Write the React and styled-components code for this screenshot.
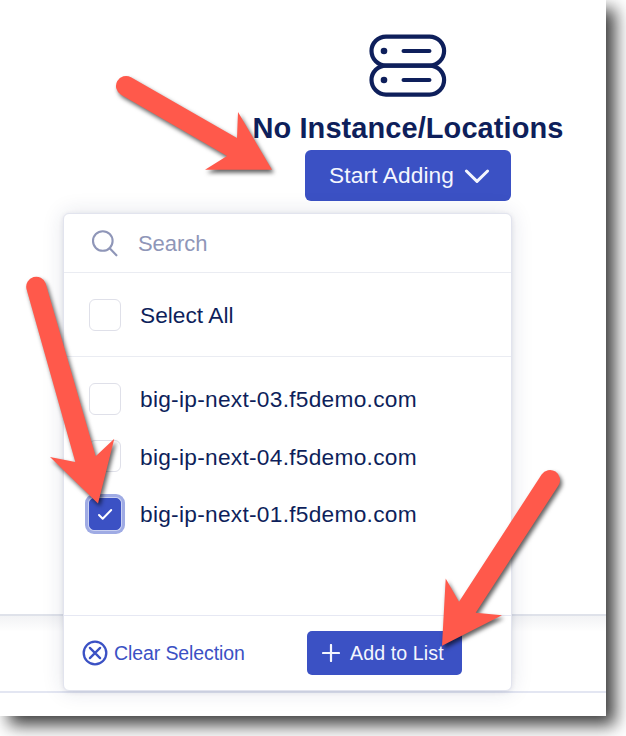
import React from "react";
import styled, { createGlobalStyle, css } from "styled-components";

const NAVY = "#0e1f5b";
const BLUE = "#3b51c4";
const FONT = '"Liberation Sans", Arial, sans-serif';

const Global = createGlobalStyle`
  *, *::before, *::after { box-sizing: border-box; }
  body { margin: 0; background: #fff; overflow: hidden; font-family: ${FONT}; }
`;

const Frame = styled.div`
  width: 626px;
  height: 736px;
  overflow: hidden;
`;

const Sheet = styled.main`
  position: relative;
  display: flex;
  flex-direction: column;
  width: 606px;
  height: 716px;
  background: #fff;
  box-shadow: 9px 9px 16px rgba(0, 0, 0, 0.76);
`;

const EmptyState = styled.section`
  display: flex;
  flex-direction: column;
  align-items: center;
  height: 614px;
  padding: 34px 0 0 210px;
`;

const Title = styled.h1`
  margin: 14px 0 5px;
  font-size: 29px;
  line-height: 34px;
  font-weight: 700;
  letter-spacing: 0.07px;
  white-space: nowrap;
  color: ${NAVY};
`;

const Button = styled.button`
  display: flex;
  align-items: center;
  flex-shrink: 0;
  border: 0;
  background: ${BLUE};
  color: #f4f6fe;
  font-family: ${FONT};
  white-space: nowrap;
  ${(p) =>
    p.$large
      ? css`
          width: 206px;
          height: 51px;
          padding: 0 0 0 24px;
          gap: 10px;
          border-radius: 6px;
          font-size: 22.7px;
          letter-spacing: 0.12px;
        `
      : css`
          width: 155px;
          height: 44px;
          padding: 0 0 0 15px;
          gap: 10px;
          border-radius: 5px;
          font-size: 19.6px;
          letter-spacing: 0.1px;
        `}
`;

const FooterBand = styled.div`
  height: 79px;
  border-top: 2px solid #dfe2ea;
  border-bottom: 2px solid #e3e6f2;
  background: linear-gradient(rgba(40, 50, 80, 0.06), rgba(40, 50, 80, 0) 16px);
`;

const Menu = styled.div`
  position: absolute;
  left: 63px;
  top: 213px;
  display: flex;
  flex-direction: column;
  width: 449px;
  height: 478px;
  border: 1px solid #e2e4ee;
  border-radius: 6px;
  background: #fff;
  box-shadow: 0 0 22px rgba(30, 40, 90, 0.12), 0 1px 5px rgba(30, 40, 90, 0.1);
`;

const SearchBar = styled.div`
  display: flex;
  align-items: center;
  gap: 20px;
  height: 59px;
  padding-left: 27px;
  border-bottom: 1px solid #eaecf2;
  color: #8f96b8;
  font-size: 22px;
  letter-spacing: -0.05px;
`;

const SelectAll = styled.div`
  display: flex;
  align-items: center;
  height: 84px;
  padding-left: 25px;
  border-bottom: 1px solid #eaecf2;
`;

const Options = styled.div`
  display: flex;
  flex-direction: column;
  flex: 1;
  padding: 13px 0 0 25px;
`;

const Option = styled.label`
  display: flex;
  align-items: center;
  gap: 19px;
  height: 57.5px;
  color: ${NAVY};
  font-size: 22.7px;
  letter-spacing: ${(p) => p.$tracking || "0.28px"};
  white-space: nowrap;
`;

const Label = styled.span`
  padding-top: 2px;
`;

const Box = styled.span`
  display: flex;
  align-items: center;
  justify-content: center;
  width: 32px;
  height: 32px;
  border: 1px solid #dfe0e9;
  border-radius: 6px;
  background: #fff;
  ${(p) =>
    p.$checked &&
    css`
      border-color: ${BLUE};
      border-radius: 5px;
      background: ${BLUE};
      box-shadow: 0 0 0 1px #c9d0f1, 0 0 0 4px #9fabe4;
    `}
`;

const MenuFooter = styled.footer`
  display: flex;
  align-items: center;
  justify-content: space-between;
  height: 75px;
  padding: 0 49px 0 18px;
  border-top: 1px solid #e6e8f3;
`;

const ClearLink = styled.a`
  display: flex;
  align-items: center;
  gap: 6px;
  color: ${BLUE};
  font-size: 19.5px;
  letter-spacing: -0.1px;
`;

const Icon = styled.svg`
  display: block;
  flex-shrink: 0;
  fill: none;
  stroke: currentColor;
  stroke-linecap: round;
  stroke-linejoin: round;
`;

const ServerIcon = styled(Icon)`
  color: ${NAVY};
`;

const Annotations = styled.svg`
  position: absolute;
  left: 0;
  top: 0;
  fill: #ff594b;
  pointer-events: none;
`;

const Arrow = styled.path`
  filter: drop-shadow(2.5px 3px 2px rgba(0, 0, 0, 0.62));
`;

const hosts = [
  { name: "big-ip-next-03.f5demo.com" },
  { name: "big-ip-next-04.f5demo.com" },
  { name: "big-ip-next-01.f5demo.com", checked: true },
];

const arrows = [
  "M131 77.3 L237 138 L238 112 L272 169.7 L205 169.7 L227 156 L121 94.7 A10 10 0 0 1 131 77.3 Z",
  "M45.6 283.3 L95.7 456.3 L114.3 438.7 L98 503.5 L50 457 L75.3 462 L26.4 288.7 A10 10 0 0 1 45.6 283.3 Z",
  "M558.4 485.5 L475.7 612.7 L502 615.3 L442 645.7 L445.7 578.5 L459 601.7 L541.6 474.5 A10 10 0 0 1 558.4 485.5 Z",
];

export default function App() {
  return (
    <Frame>
      <Global />
      <Sheet>
        <EmptyState>
          <ServerIcon width="78" height="63" viewBox="0 0 78 63" strokeWidth="4.2">
            <rect x="2.5" y="2.6" width="72.6" height="29" rx="14.5" />
            <rect x="2.5" y="31.6" width="72.6" height="29" rx="14.5" />
            <path d="M34.6 17H60.4M34.6 46H60.4" />
            <circle cx="15" cy="17" r="3.3" fill="currentColor" stroke="none" />
            <circle cx="15" cy="46" r="3.3" fill="currentColor" stroke="none" />
          </ServerIcon>
          <Title>No Instance/Locations</Title>
          <Button $large>
            Start Adding
            <Icon width="26" height="16" viewBox="0 0 26 16" strokeWidth="3">
              <path d="M2.4 3 13 13.3 23.6 3" />
            </Icon>
          </Button>
        </EmptyState>
        <FooterBand />
        <Menu>
          <SearchBar>
            <Icon width="27" height="27" viewBox="0 0 27 27" strokeWidth="2.1">
              <circle cx="11.8" cy="11" r="9.8" />
              <path d="M18.7 18.2 25.4 25.3" />
            </Icon>
            <Label>Search</Label>
          </SearchBar>
          <SelectAll>
            <Option $tracking="0.02px">
              <Box />
              <Label>Select All</Label>
            </Option>
          </SelectAll>
          <Options>
            {hosts.map((h) => (
              <Option key={h.name}>
                <Box $checked={h.checked}>
                  {h.checked && (
                    <Icon width="16" height="14" viewBox="0 0 16 14" strokeWidth="2" color="#fff">
                      <path d="M2 8 5.7 11.7 14.2 3" />
                    </Icon>
                  )}
                </Box>
                <Label>{h.name}</Label>
              </Option>
            ))}
          </Options>
          <MenuFooter>
            <ClearLink>
              <Icon width="26" height="26" viewBox="0 0 26 26" strokeWidth="2.3">
                <circle cx="13" cy="13" r="11.3" />
                <path d="M7.9 7.9 18.1 18.1M18.1 7.9 7.9 18.1" />
              </Icon>
              Clear Selection
            </ClearLink>
            <Button>
              <Icon width="18" height="18" viewBox="0 0 18 18" strokeWidth="2.2">
                <path d="M9 1V17M1 9H17" />
              </Icon>
              Add to List
            </Button>
          </MenuFooter>
        </Menu>
        <Annotations width="606" height="716" viewBox="0 0 606 716">
          {arrows.map((d) => (
            <Arrow key={d} d={d} />
          ))}
        </Annotations>
      </Sheet>
    </Frame>
  );
}
